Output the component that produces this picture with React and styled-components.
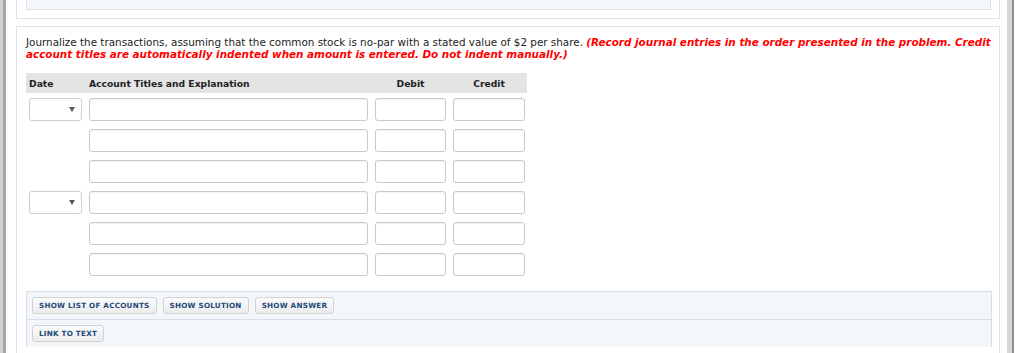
import React from 'react';
import styled, { createGlobalStyle } from 'styled-components';

const GlobalStyle = createGlobalStyle`
  html, body {
    margin: 0;
    padding: 0;
    background: #ffffff;
  }
  body {
    font-family: 'DejaVu Sans', Verdana, sans-serif;
    color: #222;
  }
`;

// 바깥 회색 테두리
const Frame = styled.div`
  width: 1014px;
  height: 353px;
  box-sizing: border-box;
  border-left: 3px solid #d2d2d2;
  border-right: 2px solid #8f8f8f;
  overflow: hidden;
`;

// 안쪽 테두리
const Shell = styled.div`
  height: 100%;
  box-sizing: border-box;
  border-left: 3px solid #a6a6a6;
  border-right: 5px solid #d6d6d6;
  padding: 0 7px 0 10px;
  display: flex;
  flex-direction: column;
  gap: 7px;
  background: #fff;
`;

// 이전 문제 (잘림)
const PrevPart = styled.div`
  height: 19px;
  box-sizing: border-box;
  border: 1px solid #dbe2ea;
  border-top: none;
  padding: 0 8px 0 9px;
  background: #fff;
`;

const PrevInner = styled.div`
  height: 10px;
  box-sizing: border-box;
  border: 1px solid #dbe2ea;
  border-top: none;
  background: #f4f7fa;
`;

// 현재 문제
const Part = styled.div`
  flex: 1;
  box-sizing: border-box;
  border: 1px solid #dbe2ea;
  border-bottom: none;
  padding: 9px 8px 0 9px;
  background: #fff;
`;

const Instructions = styled.p`
  margin: 0;
  font-size: 10.4px;
  line-height: 12px;
  color: #222;
`;

const Emphasis = styled.em`
  font-weight: bold;
  color: #ff0000;
`;

// 분개 표
const Journal = styled.div`
  margin-top: 13px;
  width: 501px;
`;

const columns = '53px 279px 71px 72px';

const HeaderRow = styled.div`
  display: grid;
  grid-template-columns: ${columns};
  column-gap: 7px;
  align-items: center;
  height: 20px;
  padding-left: 3px;
  background: #e4e4e4;
  font-size: 9.2px;
  font-weight: bold;
  color: #222;
`;

const HeaderCell = styled.div`
  text-align: ${props => (props.center ? 'center' : 'left')};
`;

const Rows = styled.div`
  display: flex;
  flex-direction: column;
  gap: 8px;
  margin-top: 5px;
  padding-left: 3px;
`;

const Row = styled.div`
  display: grid;
  grid-template-columns: ${columns};
  column-gap: 7px;
  height: 23px;
`;

const Field = styled.div`
  box-sizing: border-box;
  height: 23px;
  border: 1px solid #c9c9c9;
  border-radius: 3px;
  background: #fff;
  box-shadow: inset 0 1px 1px rgba(0, 0, 0, 0.05);
`;

const DateSelect = styled.div`
  box-sizing: border-box;
  height: 23px;
  border: 1px solid #cfcfcf;
  border-radius: 3px;
  background: #fff;
  display: flex;
  align-items: center;
  justify-content: flex-end;
  padding-right: 6px;
`;

const Caret = styled.span`
  width: 0;
  height: 0;
  border-left: 3px solid transparent;
  border-right: 3px solid transparent;
  border-top: 5px solid #555;
`;

// 하단 버튼 상자
const Toolbox = styled.div`
  margin-top: 15px;
  width: 966px;
  box-sizing: border-box;
  border: 1px solid #d6dee7;
  border-bottom: none;
  background: #f4f7fa;
`;

const ButtonRow = styled.div`
  display: flex;
  gap: 6px;
  padding: 5px;
  border-top: ${props => (props.divided ? '1px solid #d6dee7' : 'none')};
`;

const Button = styled.button`
  all: unset;
  box-sizing: border-box;
  height: 17px;
  padding: 0 6px;
  display: flex;
  align-items: center;
  border: 1px solid #d2d2d2;
  border-radius: 3px;
  background: linear-gradient(#fbfbfb, #ececec);
  font-family: 'DejaVu Sans', Verdana, sans-serif;
  font-size: 7.2px;
  font-weight: bold;
  letter-spacing: 0.25px;
  color: #23497a;
  cursor: pointer;
`;

const entries = [
  { date: true },
  { date: false },
  { date: false },
  { date: true },
  { date: false },
  { date: false },
];

const App = () => {
  return (
    <>
      <GlobalStyle />
      <Frame>
        <Shell>
          <PrevPart>
            <PrevInner />
          </PrevPart>
          <Part>
            <Instructions>
              Journalize the transactions, assuming that the common stock is no-par with a stated value of $2 per share.{' '}
              <Emphasis>
                (Record journal entries in the order presented in the problem. Credit account titles are automatically
                indented when amount is entered. Do not indent manually.)
              </Emphasis>
            </Instructions>
            <Journal>
              <HeaderRow>
                <HeaderCell>Date</HeaderCell>
                <HeaderCell>Account Titles and Explanation</HeaderCell>
                <HeaderCell center>Debit</HeaderCell>
                <HeaderCell center>Credit</HeaderCell>
              </HeaderRow>
              <Rows>
                {entries.map((entry, i) => (
                  <Row key={i}>
                    {entry.date ? (
                      <DateSelect>
                        <Caret />
                      </DateSelect>
                    ) : (
                      <div />
                    )}
                    <Field />
                    <Field />
                    <Field />
                  </Row>
                ))}
              </Rows>
            </Journal>
            <Toolbox>
              <ButtonRow>
                <Button>SHOW LIST OF ACCOUNTS</Button>
                <Button>SHOW SOLUTION</Button>
                <Button>SHOW ANSWER</Button>
              </ButtonRow>
              <ButtonRow divided>
                <Button>LINK TO TEXT</Button>
              </ButtonRow>
            </Toolbox>
          </Part>
        </Shell>
      </Frame>
    </>
  );
};

export default App;
